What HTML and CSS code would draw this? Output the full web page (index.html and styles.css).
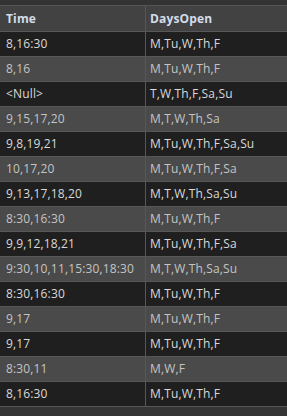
FILE: index.html
```html
<!DOCTYPE html>
<html>
<head>
<meta charset="utf-8">
<link rel="stylesheet" href="styles.css">
</head>
<body>
<div class="topbar"></div>
<table class="grid">
  <thead>
    <tr><th class="c1">Time</th><th class="c2">DaysOpen</th></tr>
  </thead>
  <tbody>
    <tr class="dark"><td>8,16:30</td><td>M,Tu,W,Th,F</td></tr>
    <tr class="light"><td>8,16</td><td>M,Tu,W,Th,F</td></tr>
    <tr class="dark"><td>&lt;Null&gt;</td><td>T,W,Th,F,Sa,Su</td></tr>
    <tr class="light"><td>9,15,17,20</td><td>M,T,W,Th,Sa</td></tr>
    <tr class="dark"><td>9,8,19,21</td><td>M,Tu,W,Th,F,Sa,Su</td></tr>
    <tr class="light"><td>10,17,20</td><td>M,Tu,W,Th,F,Sa</td></tr>
    <tr class="dark"><td>9,13,17,18,20</td><td>M,T,W,Th,Sa,Su</td></tr>
    <tr class="light"><td>8:30,16:30</td><td>M,Tu,W,Th,F</td></tr>
    <tr class="dark"><td>9,9,12,18,21</td><td>M,Tu,W,Th,F,Sa</td></tr>
    <tr class="light"><td>9:30,10,11,15:30,18:30</td><td>M,T,W,Th,Sa,Su</td></tr>
    <tr class="dark"><td>8:30,16:30</td><td>M,Tu,W,Th,F</td></tr>
    <tr class="light"><td>9,17</td><td>M,Tu,W,Th,F</td></tr>
    <tr class="dark"><td>9,17</td><td>M,Tu,W,Th,F</td></tr>
    <tr class="light"><td>8:30,11</td><td>M,W,F</td></tr>
    <tr class="dark"><td>8,16:30</td><td>M,Tu,W,Th,F</td></tr>
  </tbody>
</table>
</body>
</html>
```
FILE: styles.css
```css
html, body {
  margin: 0;
  padding: 0;
  background: #353535;
  width: 287px;
  height: 416px;
  overflow: hidden;
}
body {
  font-family: "Open Sans", "Noto Sans", sans-serif;
  font-size: 12px;
  letter-spacing: 0.15px;
}
.topbar {
  height: 5px;
  background: #333333;
  border-bottom: 1px solid #555555;
}
.grid {
  width: 287px;
  border-collapse: collapse;
  table-layout: fixed;
}
.grid th, .grid td {
  height: 24px;
  padding: 0 0 0 6px;
  text-align: left;
  white-space: nowrap;
  border-bottom: 1px solid #575757;
  border-right: 1px solid #575757;
  line-height: 24px;
}
.grid th:last-child, .grid td:last-child {
  border-right: none;
  padding-left: 4px;
}
.c1 { width: 139px; }
.grid th {
  background: #424242;
  color: #d4dcea;
  font-weight: 700;
  height: 25px;
}
.dark td {
  background: #1f1f1f;
  color: #d9d9d9;
}
.light td {
  background: #4a4a4a;
  color: #c4c4c4;
}
```
